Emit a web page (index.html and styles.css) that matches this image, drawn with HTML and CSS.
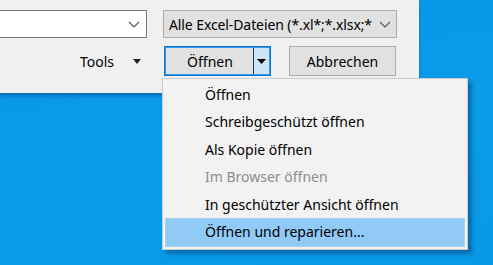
FILE: index.html
```html
<!DOCTYPE html>
<html>
<head>
<meta charset="utf-8">
<link rel="stylesheet" href="styles.css">
</head>
<body>
<div class="desktop">
  <div class="dialog">
    <div class="row row-top">
      <div class="combo">
        <span class="chev"><svg width="12" height="7" viewBox="0 0 12 7"><path d="M1 1 L6 6 L11 1" fill="none" stroke="#555" stroke-width="1.2"/></svg></span>
      </div>
      <div class="filter">
        <span class="filter-text">Alle Excel-Dateien (*.xl*;*.xlsx;*</span>
        <span class="chev"><svg width="12" height="7" viewBox="0 0 12 7"><path d="M1 1 L6 6 L11 1" fill="none" stroke="#555" stroke-width="1.2"/></svg></span>
      </div>
    </div>
    <div class="row row-bottom">
      <div class="tools">
        <span class="tools-label">Tools</span>
        <svg class="tri" width="8" height="5" viewBox="0 0 8 5"><path d="M0 0 H8 L4 5 Z" fill="#222"/></svg>
      </div>
      <div class="split">
        <span class="split-main">Öffnen</span>
        <span class="split-arrow"><svg width="9" height="5" viewBox="0 0 9 5"><path d="M0 0 H9 L4.5 5 Z" fill="#000"/></svg></span>
      </div>
      <div class="btn">Abbrechen</div>
    </div>
  </div>
  <ul class="menu">
    <li class="item">Öffnen</li>
    <li class="item">Schreibgeschützt öffnen</li>
    <li class="item">Als Kopie öffnen</li>
    <li class="item disabled">Im Browser öffnen</li>
    <li class="item">In geschützter Ansicht öffnen</li>
    <li class="item active">Öffnen und reparieren...</li>
  </ul>
</div>
</body>
</html>
```
FILE: styles.css
```css
html, body {
  margin: 0;
  padding: 0;
}
body {
  width: 493px;
  height: 265px;
  overflow: hidden;
  font-family: "Noto Sans", "Open Sans", sans-serif;
  font-size: 14px;
  color: #000;
}
.desktop {
  position: relative;
  width: 493px;
  height: 265px;
  background: linear-gradient(170deg, #1a8fe0 0%, #0a98e8 20%, #0a9ce9 60%, #0998e6 100%);
}
.dialog {
  width: 419px;
  height: 93px;
  background: #f0f0f0;
  box-shadow: 0 3px 3px rgba(0, 40, 90, 0.35);
  display: flex;
  flex-direction: column;
}
.row {
  display: flex;
  align-items: center;
}
.row-top {
  margin-top: 10px;
  height: 28px;
}
.combo {
  box-sizing: border-box;
  width: 148px;
  height: 28px;
  margin-left: -1px;
  background: #fff;
  border: 1px solid #7a7a7a;
  display: flex;
  align-items: center;
  justify-content: flex-end;
  padding-right: 6px;
}
.chev {
  display: flex;
  align-items: center;
}
.filter {
  box-sizing: border-box;
  margin-left: 16px;
  width: 234px;
  height: 28px;
  background: #e1e1e1;
  border: 1px solid #adadad;
  display: flex;
  align-items: center;
  justify-content: space-between;
  padding: 0 5px 0 5px;
  white-space: nowrap;
  overflow: hidden;
}
.filter-text {
  letter-spacing: -0.1px;
}
.row-bottom {
  margin-top: 8px;
  height: 30px;
}
.tools {
  display: flex;
  align-items: center;
  margin-left: 80px;
  width: 84px;
}
.tools-label {
  width: 53px;
}
.tri {
  margin-top: 1px;
}
.split {
  box-sizing: border-box;
  width: 107px;
  height: 30px;
  border: 1px solid #0078d7;
  box-shadow: inset 0 0 0 1px #3d95df;
  background: #e1e1e1;
  display: flex;
  align-items: stretch;
}
.split-main {
  flex: 1;
  display: flex;
  align-items: center;
  justify-content: center;
  border-right: 1px solid #333;
  margin: 1px 0;
  padding-left: 2px;
}
.split-arrow {
  width: 15px;
  margin: 1px 1px 1px 0;
  background: #cde4f7;
  display: flex;
  align-items: center;
  justify-content: center;
}
.btn {
  box-sizing: border-box;
  margin-left: 18px;
  width: 107px;
  height: 30px;
  background: #e1e1e1;
  border: 1px solid #adadad;
  display: flex;
  align-items: center;
  justify-content: center;
}
.menu {
  position: absolute;
  left: 162px;
  top: 78px;
  width: 306px;
  height: 172px;
  box-sizing: border-box;
  margin: 0;
  padding: 3px 3px 3px 3px;
  list-style: none;
  background: #f2f2f2;
  border: 1px solid #cccccc;
  box-shadow: 4px 4px 4px rgba(0, 30, 70, 0.35);
}
.item {
  height: 27.4px;
  line-height: 26px;
  padding-left: 39px;
  white-space: nowrap;
}
.item.disabled {
  color: #8d8d8d;
}
.item.active {
  background: #91c9f7;
  outline: 1px solid #a6d2f8;
}
```
